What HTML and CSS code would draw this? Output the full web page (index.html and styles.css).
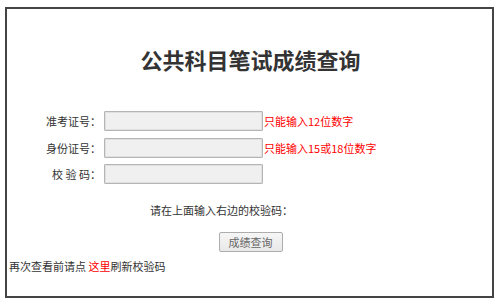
FILE: index.html
```html
<!DOCTYPE html>
<html lang="zh">
<head>
<meta charset="utf-8">
<title>公共科目笔试成绩查询</title>
<link rel="stylesheet" href="styles.css">
</head>
<body>
<div class="box">
  <h1 class="title">公共科目笔试成绩查询</h1>
  <form class="form">
    <div class="row">
      <label class="label">准考证号：</label>
      <input class="field" type="text">
      <span class="hint">只能输入12位数字</span>
    </div>
    <div class="row">
      <label class="label">身份证号：</label>
      <input class="field" type="text">
      <span class="hint">只能输入15或18位数字</span>
    </div>
    <div class="row">
      <label class="label">校 验 码：</label>
      <input class="field" type="text">
    </div>
    <p class="tip">请在上面输入右边的校验码：</p>
    <div class="actions">
      <button class="btn" type="button">成绩查询</button>
    </div>
  </form>
  <p class="refresh">再次查看前请点 <a class="link" href="#">这里</a>刷新校验码</p>
</div>
</body>
</html>
```
FILE: styles.css
```css
html, body {
  margin: 0;
  padding: 0;
  background: #fff;
}
body {
  font-family: "Noto Sans CJK SC", "Noto Sans", sans-serif;
  font-size: 11px;
  color: #333;
}
.box {
  margin: 7px 0 0 5px;
  width: 489px;
  height: 291px;
  box-sizing: border-box;
  border: 2px solid #444;
  padding: 0 0 0 2px;
}
.title {
  margin: 35px 0 0 0;
  font-size: 22px;
  line-height: 30px;
  font-weight: bold;
  color: #333;
  text-align: center;
}
.form {
  margin: 37px 0 0 0;
}
.row {
  display: flex;
  align-items: center;
  height: 20px;
  margin-bottom: 6.5px;
}
.label {
  width: 92px;
  text-align: right;
  margin-right: 3px;
  white-space: pre;
}
.field {
  width: 159px;
  height: 20px;
  box-sizing: border-box;
  margin: 0;
  padding: 0 3px;
  border: 1px solid #b5b5b5;
  box-shadow: inset 0 0 0 1px #e0e0e0;
  background: #f0f0f0;
  border-radius: 1px;
}
.hint {
  color: #f00;
  margin-left: 1px;
}
.tip {
  margin: 18px 0 0 0;
  line-height: 16px;
  text-align: center;
  padding-right: 58px;
}
.actions {
  display: flex;
  justify-content: center;
  margin-top: 14px;
}
.btn {
  width: 64px;
  height: 20px;
  margin: 0;
  padding: 0;
  font-family: inherit;
  font-size: 11px;
  color: #666;
  background: linear-gradient(#f6f6f6, #e8e8e8);
  border: 1px solid #adadad;
  border-radius: 2px;
}
.refresh {
  margin: 6px 0 0 0;
  line-height: 16px;
}
.link {
  color: #f00;
  text-decoration: none;
}
```
